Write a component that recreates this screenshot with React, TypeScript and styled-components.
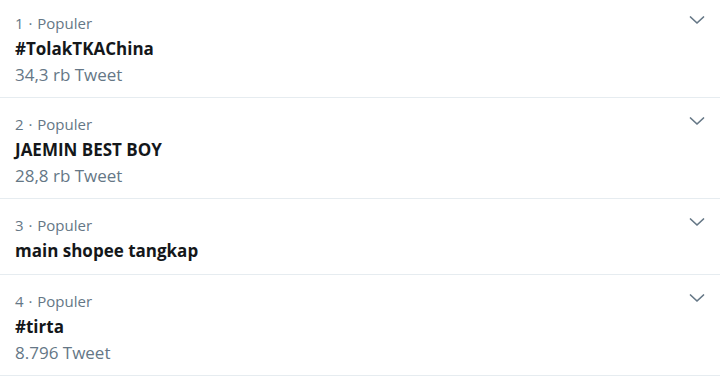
import React from "react";
import styled, { createGlobalStyle } from "styled-components";

const Global = createGlobalStyle`
  html, body { margin: 0; padding: 0; background: #ffffff; }
  body { font-family: "Open Sans", "Noto Sans", sans-serif; -webkit-font-smoothing: antialiased; }
`;

const List = styled.div`
  display: flex;
  flex-direction: column;
  width: 720px;
`;

const Row = styled.div`
  display: flex;
  align-items: flex-start;
  justify-content: space-between;
  padding: 13px 14px 10px 15px;
  border-bottom: 1px solid #e6ecf0;
  &:first-child { padding-top: 10px; }
`;

const Body = styled.div`
  display: flex;
  flex-direction: column;
`;

const Meta = styled.div`
  color: #657786;
  font-size: 15px;
  line-height: 26px;
  word-spacing: 1px;
`;

const Title = styled.div`
  color: #14171a;
  font-size: 17px;
  font-weight: 700;
  line-height: 26px;
`;

const Count = styled.div`
  color: #657786;
  font-size: 17px;
  line-height: 25px;
`;

const Chevron = styled.button`
  border: 0;
  background: none;
  padding: 0;
  margin-top: 1px;
  width: 18px;
  height: 18px;
  display: flex;
  align-items: center;
  justify-content: center;
  color: #657786;
  cursor: pointer;
`;

type Trend = { rank: number; title: string; count?: string };

const trends: Trend[] = [
  { rank: 1, title: "#TolakTKAChina", count: "34,3 rb Tweet" },
  { rank: 2, title: "JAEMIN BEST BOY", count: "28,8 rb Tweet" },
  { rank: 3, title: "main shopee tangkap" },
  { rank: 4, title: "#tirta", count: "8.796 Tweet" },
];

const ChevronIcon = () => (
  <svg width="16" height="10" viewBox="0 0 16 10" fill="none">
    <path d="M1.5 2 L8 8 L14.5 2" stroke="currentColor" strokeWidth="1.7" strokeLinecap="round" strokeLinejoin="round" />
  </svg>
);

export default function App() {
  return (
    <>
      <Global />
      <List>
        {trends.map((t) => (
          <Row key={t.rank}>
            <Body>
              <Meta>{t.rank} · Populer</Meta>
              <Title>{t.title}</Title>
              {t.count && <Count>{t.count}</Count>}
            </Body>
            <Chevron aria-label="Lainnya">
              <ChevronIcon />
            </Chevron>
          </Row>
        ))}
      </List>
    </>
  );
}
